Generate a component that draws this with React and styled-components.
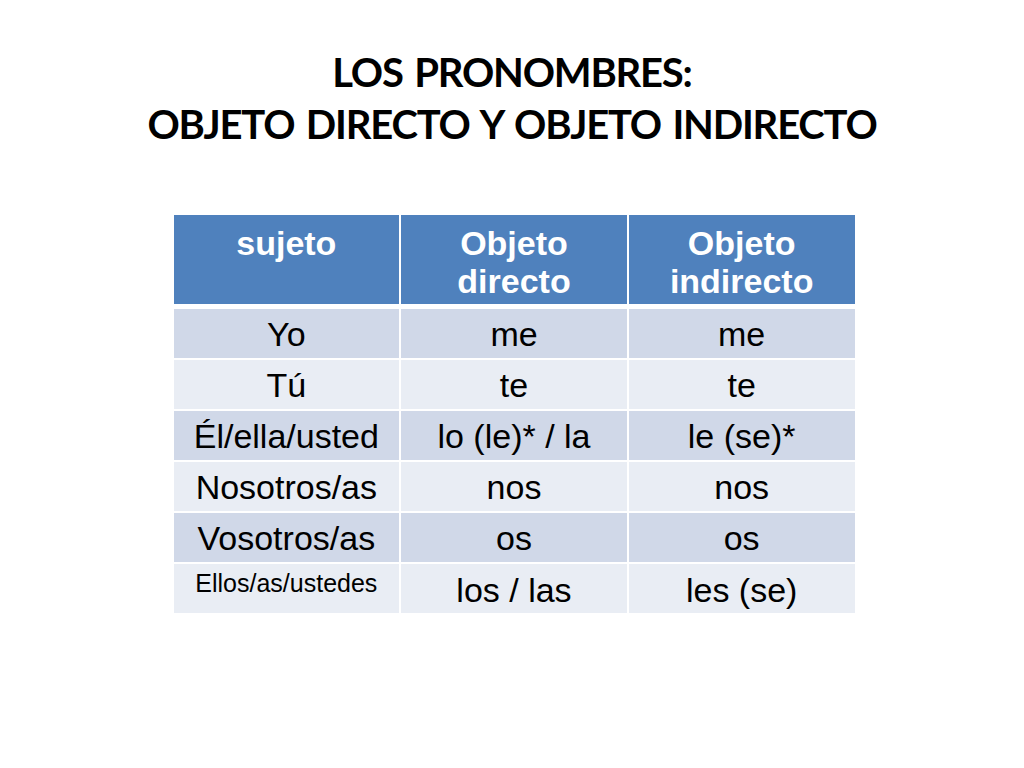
import styled, { createGlobalStyle } from "styled-components";

const Global = createGlobalStyle`
  html, body { margin: 0; padding: 0; background: #ffffff; }
  body { font-family: "Liberation Sans", Arial, sans-serif; }
`;

const Slide = styled.div`
  width: 1024px;
  height: 768px;
  display: flex;
  flex-direction: column;
  align-items: center;
  background: #fff;
`;

const Title = styled.h1`
  margin: 46px 0 0;
  font-family: Lato, "Open Sans", sans-serif;
  font-weight: 700;
  font-size: 40px;
  line-height: 52px;
  letter-spacing: -1.2px;
  word-spacing: 3px;
  color: #000;
  text-align: center;
`;

const Table = styled.div`
  margin: 65px 0 0 4px;
  width: 681px;
  display: flex;
  flex-direction: column;
  gap: 2px;
`;

const Row = styled.div`
  display: grid;
  grid-template-columns: repeat(3, 1fr);
  column-gap: 2px;
  height: ${(p) => (p.head ? "89px" : "49px")};
  margin-bottom: ${(p) => (p.head ? "3px" : "0")};
`;

const Cell = styled.div`
  background: ${(p) => (p.head ? "#4f81bd" : p.odd ? "#d0d8e8" : "#e9edf4")};
  color: ${(p) => (p.head ? "#fff" : "#000")};
  font-weight: ${(p) => (p.head ? 700 : 400)};
  font-size: ${(p) => (p.small ? "25px" : "34px")};
  line-height: ${(p) => (p.small ? "29px" : "38px")};
  padding-top: ${(p) => (p.head ? 9 : p.small ? 5 : p.pad || 6)}px;
  text-align: center;
  box-sizing: border-box;
`;

const headers = ["sujeto", ["Objeto", "directo"], ["Objeto", "indirecto"]];

const rows = [
  { cells: ["Yo", "me", "me"] },
  { cells: ["Tú", "te", "te"] },
  { cells: ["Él/ella/usted", "lo (le)* / la", "le (se)*"] },
  { cells: ["Nosotros/as", "nos", "nos"] },
  { cells: ["Vosotros/as", "os", "os"] },
  { cells: ["Ellos/as/ustedes", "los / las", "les (se)"], small: 0, pad: 7 },
];

export default function App() {
  return (
    <>
      <Global />
      <Slide>
        <Title>
          LOS PRONOMBRES:
          <br />
          OBJETO DIRECTO Y OBJETO INDIRECTO
        </Title>
        <Table>
          <Row head>
            {headers.map((h, i) => (
              <Cell head key={i}>
                {Array.isArray(h) ? (
                  <>
                    {h[0]}
                    <br />
                    {h[1]}
                  </>
                ) : (
                  h
                )}
              </Cell>
            ))}
          </Row>
          {rows.map((r, i) => (
            <Row key={i}>
              {r.cells.map((c, j) => (
                <Cell
                  key={j}
                  odd={i % 2 === 0}
                  small={r.small === j}
                  pad={r.pad}
                >
                  {c}
                </Cell>
              ))}
            </Row>
          ))}
        </Table>
      </Slide>
    </>
  );
}
